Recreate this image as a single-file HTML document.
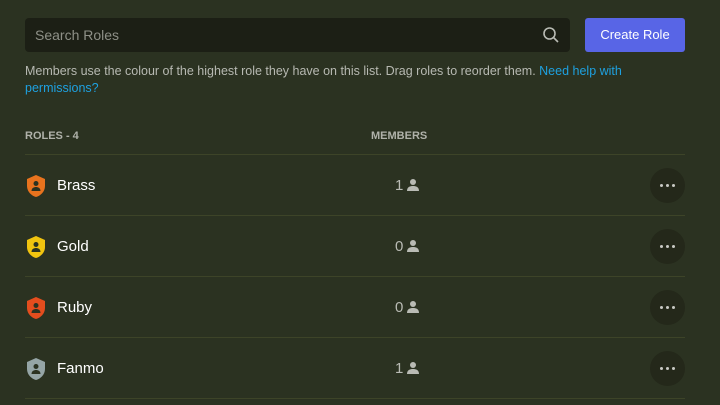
<!DOCTYPE html>
<html><head><style>
*{margin:0;padding:0;box-sizing:border-box}
body{width:720px;height:405px;overflow:hidden;background:#2b3221;font-family:"Liberation Sans",sans-serif;position:relative;color:#dcddde}
.search{position:absolute;left:25px;top:18px;width:545px;height:34px;background:#1c1f15;border-radius:4px}
.search span{position:absolute;left:10px;top:9px;font-size:14px;color:#8e9087}
.btn{position:absolute;left:585px;top:18px;width:100px;height:34px;background:#5865e6;border-radius:3px;color:#fff;font-size:13px;text-align:center;line-height:34px}
.desc{position:absolute;left:25px;top:63px;width:640px;font-size:12.5px;line-height:17px;color:#b7b9b2}
.desc a{color:#1ea1e0;text-decoration:none}
.hdr{position:absolute;top:130px;font-size:11px;font-weight:bold;color:#b0b2aa}
.line{position:absolute;left:25px;width:660px;height:1px;background:#3d4428}
.row{position:absolute;left:25px;width:660px;height:60px}
.row .name{position:absolute;left:32px;top:22px;font-size:15px;color:#fff}
.row .cnt{position:absolute;left:370px;top:22px;font-size:15px;color:#b9bbb4}
.row .cnt svg{vertical-align:-2px;margin-left:3px}
.dots{position:absolute;left:625px;top:13px;width:35px;height:35px;border-radius:50%;background:#24281a;display:flex;align-items:center;justify-content:center;gap:3px}
.dots i{width:3px;height:3px;border-radius:50%;background:#c8c9c4}
.shield{position:absolute;left:0;top:19px}
</style></head><body>
<div class="search"><span>Search Roles</span>
<svg style="position:absolute;left:517px;top:8px" width="18" height="18" viewBox="0 0 18 18"><circle cx="7.5" cy="7.5" r="5.5" fill="none" stroke="#b9bbb4" stroke-width="1.6"/><path d="M11.5 11.5L16 16" stroke="#b9bbb4" stroke-width="1.6"/></svg></div>
<div class="btn">Create Role</div>
<div class="desc">Members use the colour of the highest role they have on this list. Drag roles to reorder them. <a>Need help with permissions?</a></div>
<div class="hdr" style="left:25px">ROLES - 4</div>
<div class="hdr" style="left:371px">MEMBERS</div>
<div class="line" style="top:154px"></div>
<div class="line" style="top:215px"></div>
<div class="line" style="top:276px"></div>
<div class="line" style="top:337px"></div>
<div class="line" style="top:398px"></div>

<div class="row" style="top:155px"><svg class="shield" width="22" height="24" viewBox="0 0 22 24"><path d="M11 1L20 5V12C20 18 15 22 11 23C7 22 2 18 2 12V5Z" fill="#e8731e"/><circle cx="11" cy="9.5" r="2.5" fill="#2b3221"/><path d="M6.5 17C6.5 14 9 13 11 13S15.5 14 15.5 17Z" fill="#2b3221"/></svg><span class="name">Brass</span><span class="cnt">1<svg width="14" height="14" viewBox="0 0 14 14"><circle cx="7" cy="4" r="3" fill="#b9bbb4"/><path d="M1 13C1 9 4 8 7 8S13 9 13 13Z" fill="#b9bbb4"/></svg></span><div class="dots"><i></i><i></i><i></i></div></div>

<div class="row" style="top:216px"><svg class="shield" width="22" height="24" viewBox="0 0 22 24"><path d="M11 1L20 5V12C20 18 15 22 11 23C7 22 2 18 2 12V5Z" fill="#f1c40f"/><circle cx="11" cy="9.5" r="2.5" fill="#2b3221"/><path d="M6.5 17C6.5 14 9 13 11 13S15.5 14 15.5 17Z" fill="#2b3221"/></svg><span class="name">Gold</span><span class="cnt">0<svg width="14" height="14" viewBox="0 0 14 14"><circle cx="7" cy="4" r="3" fill="#b9bbb4"/><path d="M1 13C1 9 4 8 7 8S13 9 13 13Z" fill="#b9bbb4"/></svg></span><div class="dots"><i></i><i></i><i></i></div></div>

<div class="row" style="top:277px"><svg class="shield" width="22" height="24" viewBox="0 0 22 24"><path d="M11 1L20 5V12C20 18 15 22 11 23C7 22 2 18 2 12V5Z" fill="#e44d1e"/><circle cx="11" cy="9.5" r="2.5" fill="#2b3221"/><path d="M6.5 17C6.5 14 9 13 11 13S15.5 14 15.5 17Z" fill="#2b3221"/></svg><span class="name">Ruby</span><span class="cnt">0<svg width="14" height="14" viewBox="0 0 14 14"><circle cx="7" cy="4" r="3" fill="#b9bbb4"/><path d="M1 13C1 9 4 8 7 8S13 9 13 13Z" fill="#b9bbb4"/></svg></span><div class="dots"><i></i><i></i><i></i></div></div>

<div class="row" style="top:338px"><svg class="shield" width="22" height="24" viewBox="0 0 22 24"><path d="M11 1L20 5V12C20 18 15 22 11 23C7 22 2 18 2 12V5Z" fill="#95a5a6"/><circle cx="11" cy="9.5" r="2.5" fill="#2b3221"/><path d="M6.5 17C6.5 14 9 13 11 13S15.5 14 15.5 17Z" fill="#2b3221"/></svg><span class="name">Fanmo</span><span class="cnt">1<svg width="14" height="14" viewBox="0 0 14 14"><circle cx="7" cy="4" r="3" fill="#b9bbb4"/><path d="M1 13C1 9 4 8 7 8S13 9 13 13Z" fill="#b9bbb4"/></svg></span><div class="dots"><i></i><i></i><i></i></div></div>
</body></html>
